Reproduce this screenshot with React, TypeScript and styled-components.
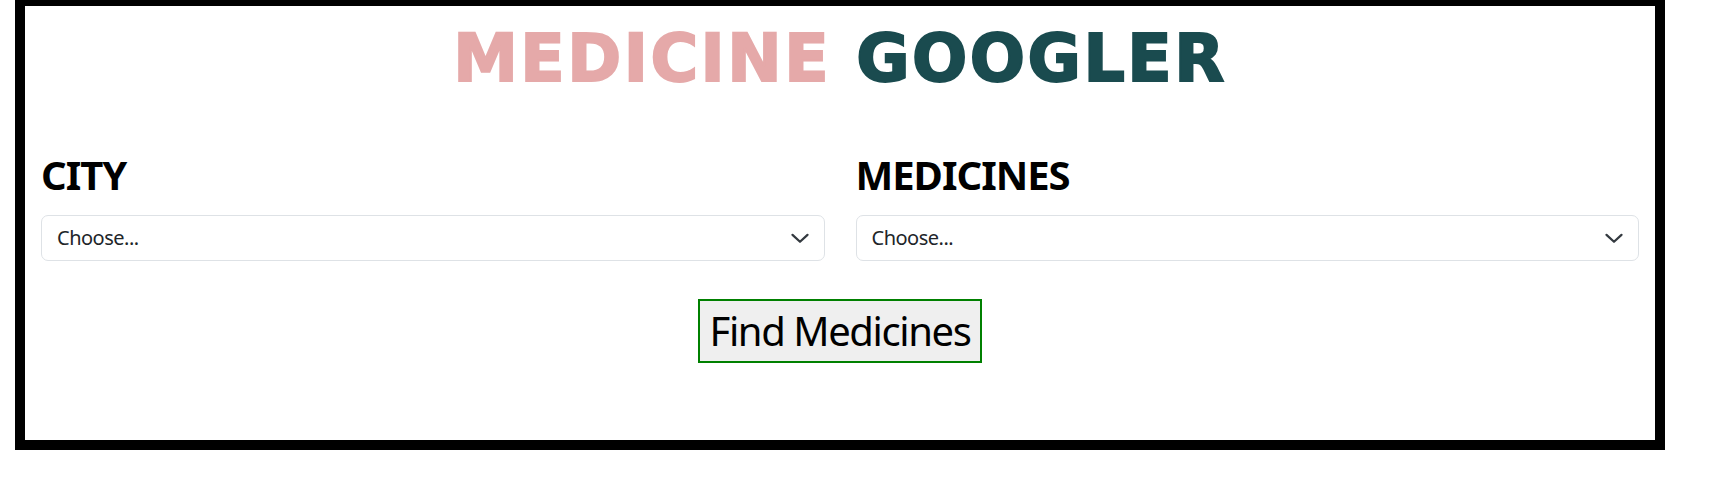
import React from 'react'
import styled, { createGlobalStyle } from 'styled-components'

const GlobalStyle = createGlobalStyle`
  body {
    margin: 0;
    background: #fff;
    font-family: "Noto Sans", "Open Sans", sans-serif;
    color: #212529;
  }
  * {
    box-sizing: border-box;
  }
`

const cities = ['Choose...']
const medicines = ['Choose...']

const Chevron = () => (
  <svg width="20" height="15" viewBox="0 0 16 12" fill="none">
    <path d="M2 3.5l6 5.5 6-5.5" stroke="#343a40" strokeWidth="1.8" strokeLinecap="round" strokeLinejoin="round" />
  </svg>
)

interface FieldProps {
  label: string,
  options: string[]
}

const Field = ({ label, options }: FieldProps) => (
  <Column>
    <Label>{label}</Label>
    <SelectWrap>
      <Select defaultValue={options[0]}>
        {options.map(o => <option key={o}>{o}</option>)}
      </Select>
      <Arrow>
        <Chevron />
      </Arrow>
    </SelectWrap>
  </Column>
)

export default function App() {
  return (
    <>
      <GlobalStyle />
      <Frame>
        <Title>
          <TitleWord tone="#e5a9a9">MEDICINE</TitleWord>{' '}
          <TitleWord tone="#1a4b4f">GOOGLER</TitleWord>
        </Title>
        <FormRow>
          <Field label="CITY" options={cities} />
          <Field label="MEDICINES" options={medicines} />
        </FormRow>
        <Actions>
          <FindButton>Find Medicines</FindButton>
        </Actions>
      </Frame>
    </>
  )
}

const Frame = styled.div`
  width: 1650px;
  height: 454px;
  margin: -4px 0 0 15px;
  border: 10px solid #000;
  padding: 13px 16px 0;
  background: #fff;
`

const Title = styled.h1`
  margin: 0;
  text-align: center;
  font-family: "DejaVu Sans", sans-serif;
  font-weight: 700;
  font-size: 65px;
  line-height: 80px;
  letter-spacing: 2.5px;
`

const TitleWord = styled.span<{ tone: string }>`
  color: ${p => p.tone};
  -webkit-text-stroke: 2px ${p => p.tone};
`

const FormRow = styled.div`
  display: grid;
  grid-template-columns: 1fr 1fr;
  column-gap: 31px;
  margin-top: 52px;
`

const Column = styled.div`
  display: flex;
  flex-direction: column;
`

const Label = styled.h2`
  margin: 0 0 16px;
  font-family: "Noto Sans", sans-serif;
  font-weight: 700;
  font-size: 40px;
  line-height: 48px;
  letter-spacing: -1px;
  color: #000;
`

const SelectWrap = styled.div`
  position: relative;
`

const Select = styled.select`
  display: block;
  width: 100%;
  height: 46px;
  padding: 0 50px 0 15px;
  border: 1px solid #dee2e6;
  border-radius: 7px;
  background: #fff;
  appearance: none;
  font-family: "Noto Sans", sans-serif;
  font-size: 20px;
  line-height: 44px;
  letter-spacing: -0.5px;
  color: #212529;
`

const Arrow = styled.span`
  position: absolute;
  right: 15px;
  top: 50%;
  transform: translateY(-50%);
  display: flex;
  pointer-events: none;
`

const Actions = styled.div`
  display: flex;
  justify-content: center;
  margin-top: 38px;
`

const FindButton = styled.button`
  width: 284px;
  height: 64px;
  padding: 0;
  border: 2px solid #008000;
  border-radius: 0;
  background: #efefef;
  font-family: "Noto Sans", sans-serif;
  font-size: 40px;
  line-height: 60px;
  letter-spacing: -1.4px;
  color: #000;
  cursor: pointer;
`
